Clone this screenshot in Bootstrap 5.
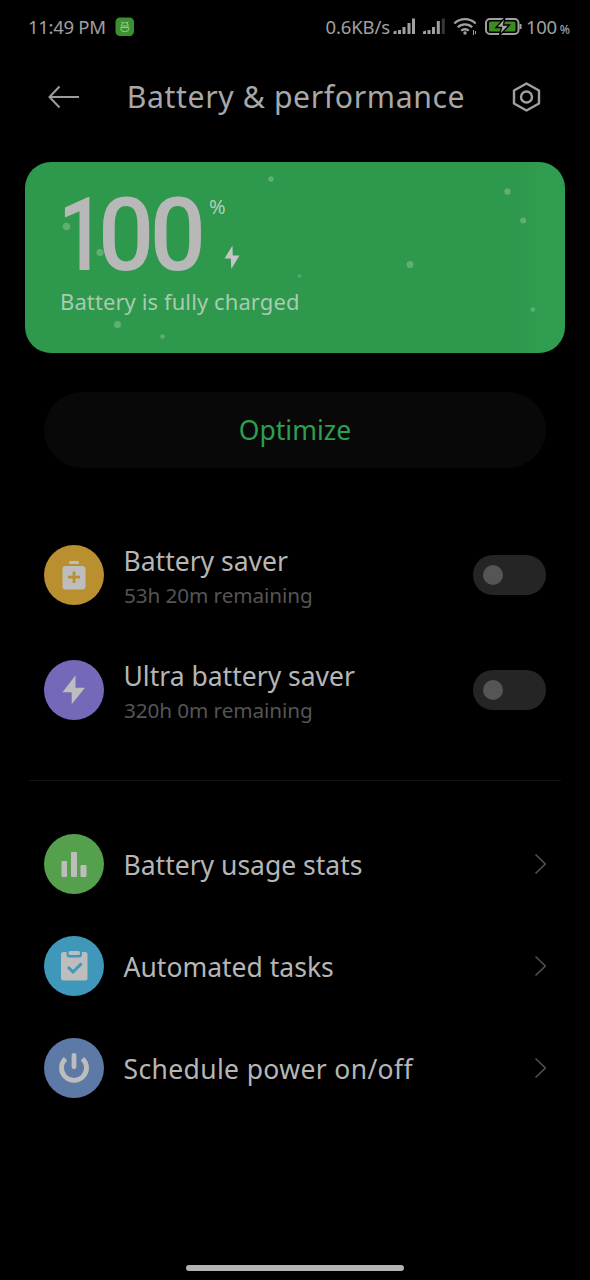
<!DOCTYPE html>
<html lang="en">
<head>
<meta charset="utf-8">
<meta name="viewport" content="width=device-width, initial-scale=1">
<title>Battery &amp; performance</title>
<link rel="stylesheet" href="https://cdn.jsdelivr.net/npm/bootstrap@5.3.0/dist/css/bootstrap.min.css">
<style>
  body { background: #000; color: #b6b6b6; font-family: "Noto Sans", sans-serif; min-height: 1280px; }
  svg { display: block; flex: none; }
  .screen { height: 1280px; overflow: hidden; white-space: nowrap; }
  .statusbar { height: 54px; padding: 0 20px 0 28px; font-size: 18.5px; letter-spacing: -.3px; color: #a0a0a0; }
  .status-left { gap: 9px; }
  .net-speed { letter-spacing: -.15px; }
  .pct-small { font-size: 12px; font-weight: 500; margin-left: 3px; letter-spacing: 0; }
  .topbar { height: 86px; padding: 0 47px 0 48px; }
  .title { font-size: 30.2px; letter-spacing: .62px; color: #a8a8a8; line-height: 40px; }
  .charge { margin: 22px 25px 0; height: 191px; border-radius: 26px; background: linear-gradient(90deg, #2e984d 90%, #309e50 98%); }
  .charge-body { padding: 35px 0 0 35px; }
  .level { font: 500 102px/76px Roboto, sans-serif; color: #b8b8b8; }
  .level-one, .level-zeros { display: inline-block; transform-origin: left; }
  .level-one { width: 40px; transform: scaleX(.82); margin-left: -2px; }
  .level-zeros { width: 106px; letter-spacing: -4.500px; transform: scaleX(.97); }
  .level-side { margin-left: 5px; }
  .unit { font-size: 20px; line-height: 20px; color: #b2cdb8; }
  .bolt { margin: 28px 0 0 15px; }
  .charge-note { font-size: 22px; line-height: 30px; letter-spacing: .1px; margin-top: 13px; color: #a9cbb1; }
  .optimize { margin: 39px 44px 0; padding: 2px 0 0; height: 76px; background: #080808; color: #2e9e50; font-size: 26.5px; }
  .entry { padding: 0 44px; gap: 20px; }
  .entry-mode { height: 115px; }
  .entry-mode .name { padding-top: 4px; }
  .entry-link { height: 102px; }
  .entry-link .name { padding-top: 1px; }
  .disc { width: 60px; height: 60px; flex: none; }
  .name { font-size: 26.5px; line-height: 36px; margin-left: -.5px; }
  .name-wide { letter-spacing: .36px; }
  .sub { font-size: 20.7px; letter-spacing: -.08px; line-height: 30px; padding-top: 1px; color: #555; }
  .switch-track { width: 73px; height: 40px; background: #252525; padding: 0 10px; }
  .switch-dot { width: 20px; height: 20px; background: #555; }
  .divide { margin: 33px 29px 32px; height: 1px; background: #131313; }
  .homebar { left: 186px; top: 1265px; width: 218px; height: 6px; background: #b3b3b3; }
  .modes { margin-top: 49px; }
</style>
</head>
<body>
<main class="screen position-relative">
  <div class="statusbar d-flex align-items-center justify-content-between">
    <div class="status-left d-flex align-items-center">
      <span>11:49 PM</span>
      <svg width="20" height="20" viewBox="0 0 20 20"><rect x=".5" y=".5" width="18.5" height="18.5" rx="4.500" fill="#3b9030"/><g fill="none" stroke="#a5cf9c" stroke-width=".9"><path d="M6.300 9a3.500 3.500 0 0 1 7 0zM5.700 10.500h8.200v1a3.500 3.500 0 0 1-3.500 3.200h-1.200a3.500 3.500 0 0 1-3.500-3.200zM7.500 6 6.500 4.500M12.200 6l1-1.500"/></g></svg>
    </div>
    <div class="d-flex align-items-center">
      <span class="net-speed">0.6KB/s</span>
      <svg width="136" height="22" viewBox="390 16 136 22">
        <g fill="#a0a0a0"><path d="M393.500 34v-2.500l3-1V34zM398 34v-4h3v4zM402.500 34v-7h3v7zM407.500 34V23h3v11zM412 34V18.500h3V34z"/><path d="M423 34v-2.500l3-1V34zM427.500 34v-4h3v4zM432 34v-7h3v7zM436.800 34V21h3v13z"/></g><path fill="#363636" d="M441.800 34V18.500h3V34z"/>
        <g fill="none" stroke="#a0a0a0" stroke-width="2.300"><path d="M454.300 23.500a15.500 15.500 0 0 1 21.400 0M457.800 27.300a10.300 10.300 0 0 1 14.400 0M461.200 30.800a5.400 5.400 0 0 1 7.600 0"/></g><circle cx="465" cy="33" r="1.700" fill="#a0a0a0"/><path d="M473.500 35v-5M475.500 31v3" stroke="#a0a0a0" fill="none"/>
        <rect x="486" y="19" width="32.500" height="15" rx="4" fill="none" stroke="#a0a0a0" stroke-width="2"/><rect x="489" y="21.500" width="26.500" height="10" rx="1.500" fill="#3b8c1d"/><path d="M520.500 24v5" stroke="#a0a0a0" stroke-width="2"/>
        <path d="m505 17.500-9 10h5.500l-2 8 10-10.500h-6z" fill="#a6a6a6" stroke="#000" stroke-width="1.300"/>
      </svg>
      <div class="d-flex align-items-baseline"><span>100</span><span class="pct-small">%</span></div>
    </div>
  </div>

  <header class="topbar d-flex align-items-center justify-content-between">
    <svg width="33" height="28" viewBox="0 0 33 28" fill="none" stroke="#9c9c9c" stroke-width="2"><path d="M11.500 3.500 1.500 14l10 10.500M1.500 14H31"/></svg>
    <h1 class="title fw-normal m-0">Battery &amp; performance</h1>
    <svg width="32" height="32" viewBox="0 0 32 32" fill="none" stroke="#a0a0a0" stroke-width="2.400"><path d="m15.500 2.500 12.500 7v13l-12.500 7-12.500-7v-13z" stroke-linejoin="round"/><circle cx="15.500" cy="16" r="5.500"/></svg>
  </header>

  <section class="charge position-relative overflow-hidden">
    <svg class="position-absolute top-0 start-0" width="540" height="191" viewBox="25 162 540 191" fill="#61ae74"><circle cx="66.500" cy="226.500" r="3.800"/><circle cx="100" cy="252.500" r="3.600"/><circle cx="271" cy="179" r="2.700"/><circle cx="507.500" cy="191.500" r="3.200"/><circle cx="523.200" cy="220.500" r="3"/><circle cx="410" cy="264.500" r="3.500"/><circle cx="299.500" cy="276" r="2" opacity=".7"/><circle cx="117.500" cy="324.500" r="3.500"/><circle cx="162.500" cy="336.500" r="2.300"/><circle cx="532.800" cy="309.500" r="2.300"/></svg>
    <div class="charge-body position-relative d-flex flex-column">
      <div class="d-flex">
        <span class="level"><span class="level-one">1</span><span class="level-zeros">00</span></span>
        <div class="level-side d-flex flex-column">
          <span class="unit">%</span>
          <svg class="bolt" width="16" height="25" viewBox="0 0 16 25" fill="#c5c5c5"><path d="M8.500.5.500 13.500h6.300L7.300 24 15.500 10.500H8.800z"/></svg>
        </div>
      </div>
      <span class="charge-note">Battery is fully charged</span>
    </div>
  </section>

  <div class="d-grid"><button class="optimize btn rounded-pill border-0">Optimize</button></div>

  <section class="modes">
    <div class="entry entry-mode d-flex align-items-center">
      <svg class="disc" viewBox="0 0 60 60"><circle cx="30" cy="30" r="30" fill="#b98f2f"/><rect x="25" y="16" width="10" height="3" rx=".8" fill="#bdbdbd"/><rect x="18.500" y="21" width="23" height="23.500" rx="3" fill="#bdbdbd"/><path d="M30 26.500v11.500M24 32.200h12" stroke="#b98f2f" stroke-width="2.800"/></svg>
      <div class="d-flex flex-column flex-grow-1 align-items-start"><span class="name">Battery saver</span><span class="sub">53h 20m remaining</span></div>
      <div class="switch-track rounded-pill d-flex align-items-center"><span class="switch-dot rounded-circle"></span></div>
    </div>
    <div class="entry entry-mode d-flex align-items-center">
      <svg class="disc" viewBox="0 0 60 60"><circle cx="30" cy="30" r="30" fill="#7468b8"/><path d="M31 16 18.500 32.300h9.200V44.300L41 27.800h-9.500V16z" fill="#bdbdbd"/></svg>
      <div class="d-flex flex-column flex-grow-1 align-items-start"><span class="name">Ultra battery saver</span><span class="sub">320h 0m remaining</span></div>
      <div class="switch-track rounded-pill d-flex align-items-center"><span class="switch-dot rounded-circle"></span></div>
    </div>
  </section>

  <div class="divide"></div>

  <nav>
    <a class="entry entry-link d-flex align-items-center text-reset text-decoration-none" href="#">
      <svg class="disc" viewBox="0 0 60 60"><circle cx="30" cy="30" r="30" fill="#55a04d"/><g fill="#bdbdbd"><rect x="17.500" y="27" width="5.500" height="16" rx="1"/><rect x="27" y="18" width="6" height="25" rx="1"/><rect x="36.500" y="31" width="6" height="12" rx="1"/></g></svg>
      <span class="name">Battery usage stats</span>
      <svg class="ms-auto" width="12" height="22" viewBox="0 0 12 22" fill="none" stroke="#505050" stroke-width="1.600"><path d="m1.500 1.500 9.800 9.500-9.800 9.500"/></svg>
    </a>
    <a class="entry entry-link d-flex align-items-center text-reset text-decoration-none" href="#">
      <svg class="disc" viewBox="0 0 60 60"><circle cx="30" cy="30" r="30" fill="#3f98b9"/><rect x="17" y="16" width="26.500" height="28.500" rx="2.500" fill="#bdbdbd"/><path d="M22.500 14v4.500q0 3 3 3h9.500q3 0 3-3V14z" fill="#3f98b9"/><rect x="24.500" y="15" width="11.500" height="4" rx="1.500" fill="#bdbdbd"/><path d="m24 31 5 5 8.500-8.500" fill="none" stroke="#3f98b9" stroke-width="3"/></svg>
      <span class="name">Automated tasks</span>
      <svg class="ms-auto" width="12" height="22" viewBox="0 0 12 22" fill="none" stroke="#505050" stroke-width="1.600"><path d="m1.500 1.500 9.800 9.500-9.800 9.500"/></svg>
    </a>
    <a class="entry entry-link d-flex align-items-center text-reset text-decoration-none" href="#">
      <svg class="disc" viewBox="0 0 60 60"><circle cx="30" cy="30" r="30" fill="#5d79a5"/><g fill="none" stroke="#bdbdbd" stroke-width="4.800"><path d="M21.500 20.700a12.500 12.500 0 1 0 17 0"/><path d="M30 17.500v11.300" stroke-linecap="round"/></g></svg>
      <span class="name name-wide">Schedule power on/off</span>
      <svg class="ms-auto" width="12" height="22" viewBox="0 0 12 22" fill="none" stroke="#505050" stroke-width="1.600"><path d="m1.500 1.500 9.800 9.500-9.800 9.500"/></svg>
    </a>
  </nav>
  <div class="homebar position-absolute rounded-pill"></div>
</main>
<script src="https://cdn.jsdelivr.net/npm/bootstrap@5.3.0/dist/js/bootstrap.bundle.min.js"></script>
</body>
</html>
